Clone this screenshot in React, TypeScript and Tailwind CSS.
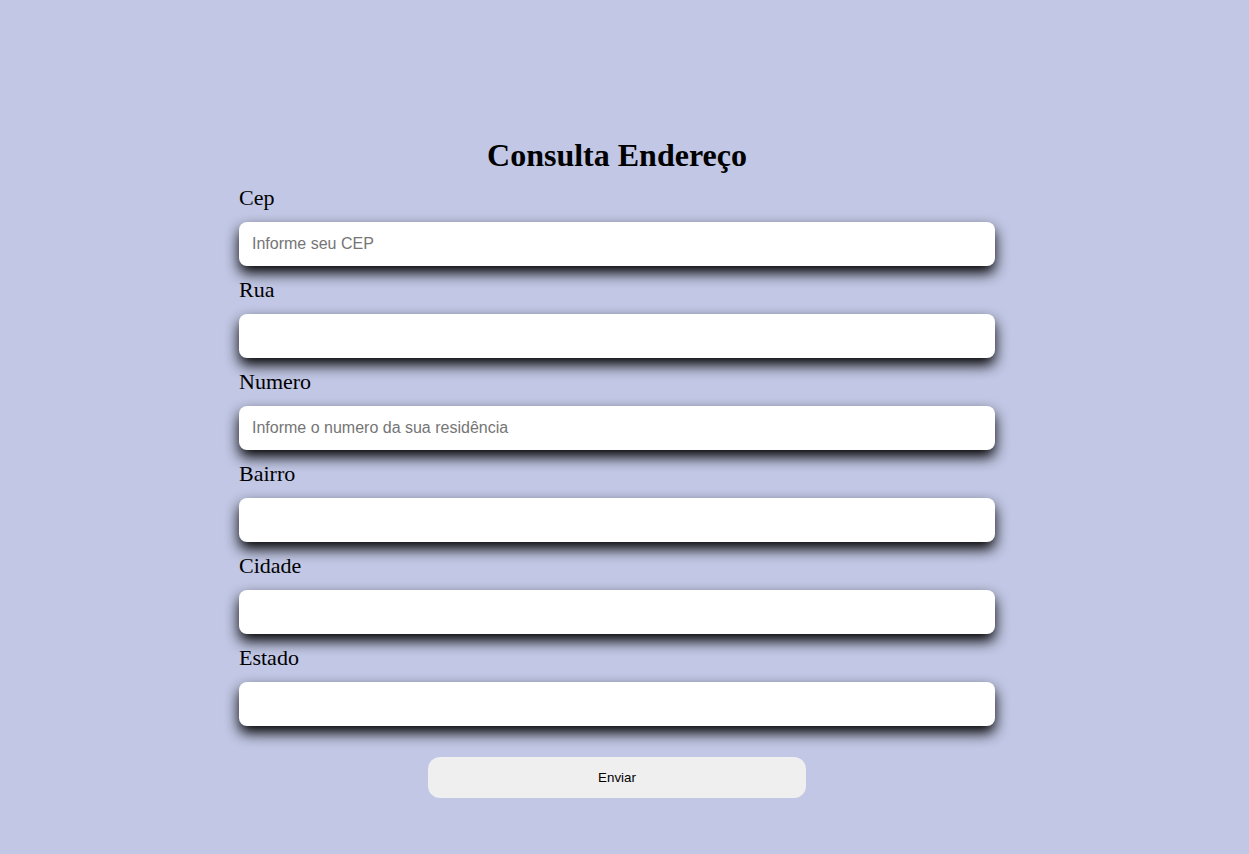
import React from "react";

const fields = [
  { label: "Cep", placeholder: "Informe seu CEP" },
  { label: "Rua", placeholder: "" },
  { label: "Numero", placeholder: "Informe o numero da sua residência" },
  { label: "Bairro", placeholder: "" },
  { label: "Cidade", placeholder: "" },
  { label: "Estado", placeholder: "" },
];

export default function App() {
  return (
    <div className="min-h-[854px] w-full bg-[#c1c7e4] pt-[137px] font-['Liberation_Serif',serif] text-black">
      <div className="ml-[239px] flex w-[756px] flex-col">
        <h1 className="text-center text-[32px] font-bold leading-[37px]">Consulta Endereço</h1>
        <div className="mt-[11px] flex flex-col">
          {fields.map((f) => (
            <div key={f.label} className="mb-[11px] flex flex-col">
              <label className="text-[22px] leading-[25px]">{f.label}</label>
              <input
                className="mt-[12px] h-[44px] w-full rounded-[8px] bg-white px-[13px] font-['Liberation_Sans',sans-serif] text-[16px] text-black shadow-[0_7px_14px_#000] outline-none placeholder:text-[#757575]"
                placeholder={f.placeholder}
              />
            </div>
          ))}
        </div>
        <button className="mx-auto mt-[20px] h-[41px] w-[378px] rounded-[12px] bg-[#efefef] font-['Liberation_Sans',sans-serif] text-[13.33px] text-black">
          Enviar
        </button>
      </div>
    </div>
  );
}
